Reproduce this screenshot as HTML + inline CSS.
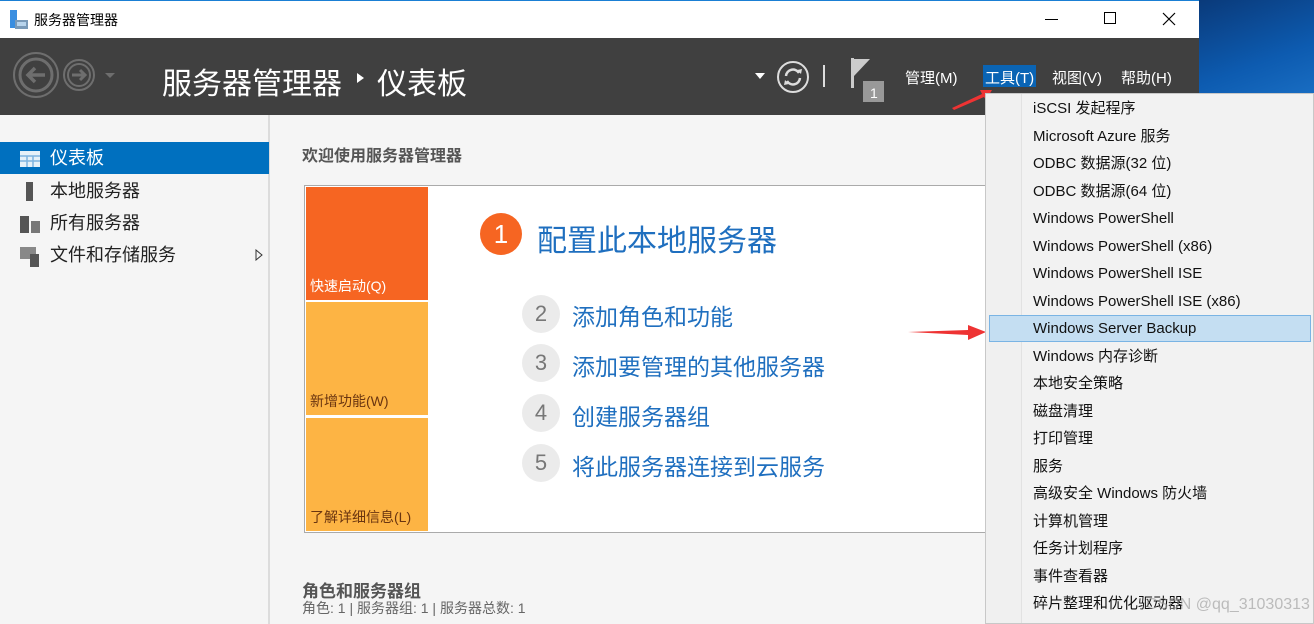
<!DOCTYPE html>
<html><head><meta charset="utf-8"><style>
*{margin:0;padding:0;box-sizing:border-box}
body{width:1314px;height:624px;overflow:hidden;position:relative;background:#f5f5f5;font-family:"Liberation Sans","Noto Sans CJK SC",sans-serif;}
.abs{position:absolute}
.desk{left:1199px;top:0;width:115px;height:100px;background:linear-gradient(160deg,#0a3a7a,#0d5bb0 60%,#1a6fc4)}
.title{left:0;top:0;width:1199px;height:38px;background:#fff;border-top:1px solid #1a7fd4}
.hdr{left:0;top:38px;width:1199px;height:77px;background:#404040}
.side{left:0;top:115px;width:270px;height:509px;background:#f5f5f5;border-right:2px solid #dcdcdc}
.nav{left:0;width:269px;height:32px;font-size:18px;color:#222;line-height:32px;padding-left:50px}
.menu{left:985px;top:93px;width:329px;height:531px;background:#f2f2f2;border:1px solid #c8c8c8}
.gut{left:0;top:0;width:36px;height:100%;background:#f0f0f0;border-right:1px solid #e2e2e2}
.mi{left:47px;font-size:15px;color:#111;line-height:20px}
.step{font-size:23px;color:#1f6fbf}
.num{width:38px;height:38px;border-radius:50%;background:#ebebeb;color:#777;font-size:22px;text-align:center;line-height:38px}
.hm{font-size:15px;color:#fff;top:29px}
</style></head><body>
<div class="abs desk"></div>
<div class="abs title">
 <svg class="abs" style="left:9px;top:9px" width="20" height="20"><rect x="1" y="0" width="7" height="18" fill="#3a8ee0"/><rect x="6" y="10" width="13" height="9" fill="#7a9ab8"/><rect x="8" y="12" width="9" height="4" fill="#b8d4ec"/></svg>
 <div class="abs" style="left:34px;top:9px;font-size:14px;color:#000">服务器管理器</div>
 <div class="abs" style="left:1045px;top:18px;width:13px;height:1px;background:#000"></div>
 <div class="abs" style="left:1104px;top:11px;width:12px;height:12px;border:1px solid #000"></div>
 <svg class="abs" style="left:1162px;top:11px" width="14" height="14"><path d="M1 1L13 13M13 1L1 13" stroke="#000" stroke-width="1.2"/></svg>
</div>
<div class="abs hdr">
 <svg class="abs" style="left:13px;top:14px" width="110" height="50"><circle cx="23" cy="23" r="22" fill="none" stroke="#6e6e6e" stroke-width="2"/><circle cx="23" cy="23" r="16" fill="none" stroke="#6e6e6e" stroke-width="3"/><path d="M32 23H15M22 16L15 23L22 30" fill="none" stroke="#6e6e6e" stroke-width="3.5"/><circle cx="66" cy="23" r="15" fill="none" stroke="#6e6e6e" stroke-width="2"/><circle cx="66" cy="23" r="11" fill="none" stroke="#6e6e6e" stroke-width="2"/><path d="M59 23H72M67 18L72 23L67 28" fill="none" stroke="#6e6e6e" stroke-width="3"/><path d="M92 21h10l-5 5z" fill="#6e6e6e"/></svg>
 <div class="abs" style="left:162px;top:21px;font-size:30px;color:#fff">服务器管理器</div>
 <svg class="abs" style="left:357px;top:35px" width="8" height="10"><path d="M0 0L7 5L0 10z" fill="#fff"/></svg>
 <div class="abs" style="left:377px;top:21px;font-size:30px;color:#fff">仪表板</div>
 <svg class="abs" style="left:755px;top:35px" width="10" height="6"><path d="M0 0h10L5 6z" fill="#fff"/></svg>
 <svg class="abs" style="left:776px;top:22px" width="34" height="34"><circle cx="17" cy="17" r="15" fill="none" stroke="#ddd" stroke-width="2"/><path d="M10 16a7 7 0 0 1 13-3M24 18a7 7 0 0 1-13 3" fill="none" stroke="#ddd" stroke-width="2.5"/><path d="M21 10l4 4l1-5zM13 24l-4-4l-1 5z" fill="#ddd"/></svg>
 <div class="abs" style="left:823px;top:27px;width:2px;height:22px;background:#ddd"></div>
 <svg class="abs" style="left:850px;top:20px" width="40" height="44"><rect x="1" y="0" width="3" height="30" fill="#ccc"/><path d="M4 1h16L4 18z" fill="#ccc"/><rect x="13" y="23" width="21" height="21" fill="#999"/><text x="20" y="40" font-size="14" fill="#fff" font-family="Liberation Sans">1</text></svg>
 <div class="abs hm" style="left:905px">管理(M)</div>
 <div class="abs" style="left:983px;top:27px;width:53px;height:22px;background:#0a64b4"></div>
 <div class="abs hm" style="left:985px">工具(T)</div>
 <div class="abs hm" style="left:1052px">视图(V)</div>
 <div class="abs hm" style="left:1121px">帮助(H)</div>
</div>
<svg class="abs" style="left:950px;top:88px" width="45" height="22"><path d="M2 20L32 6L30 2L42 2L36 12L34 9L4 22z" fill="#e33"/></svg>
<div class="abs side">
 <div class="abs nav" style="top:27px;background:#0070bf;color:#fff">仪表板</div>
 <svg class="abs" style="left:20px;top:36px" width="20" height="16"><rect width="20" height="16" fill="#fff" opacity=".9"/><path d="M0 5h20M0 10h20M7 5v11M13 5v11" stroke="#7fb4e0" stroke-width="1.5"/></svg>
 <div class="abs nav" style="top:60px">本地服务器</div>
 <div class="abs" style="left:26px;top:67px;width:7px;height:19px;background:#555"></div>
 <div class="abs nav" style="top:92px">所有服务器</div>
 <div class="abs" style="left:20px;top:101px;width:9px;height:17px;background:#555"></div><div class="abs" style="left:31px;top:106px;width:9px;height:12px;background:#777"></div>
 <div class="abs nav" style="top:124px">文件和存储服务</div>
 <div class="abs" style="left:20px;top:132px;width:16px;height:12px;background:#888"></div><div class="abs" style="left:30px;top:139px;width:9px;height:13px;background:#555"></div>
 <svg class="abs" style="left:255px;top:134px" width="8" height="12"><path d="M1 1L7 6L1 11z" fill="none" stroke="#333"/></svg>
</div>
<div class="abs" style="left:302px;top:142px;font-size:16px;font-weight:bold;color:#555">欢迎使用服务器管理器</div>
<div class="abs" style="left:304px;top:185px;width:690px;height:348px;background:#fff;border:1px solid #aaa"></div>
<div class="abs" style="left:306px;top:187px;width:122px;height:113px;background:#f66522"></div>
<div class="abs" style="left:306px;top:302px;width:122px;height:113px;background:#fdb444"></div>
<div class="abs" style="left:306px;top:418px;width:122px;height:113px;background:#fdb444"></div>
<div class="abs" style="left:310px;top:276px;font-size:14px;color:#fff">快速启动(Q)</div>
<div class="abs" style="left:310px;top:391px;font-size:14px;color:#6a3510">新增功能(W)</div>
<div class="abs" style="left:310px;top:507px;font-size:14px;color:#6a3510">了解详细信息(L)</div>
<div class="abs num" style="left:480px;top:213px;width:42px;height:42px;line-height:42px;background:#f66522;color:#fff;font-size:26px">1</div>
<div class="abs step" style="left:537px;top:216px;font-size:30px">配置此本地服务器</div>
<div class="abs num" style="left:522px;top:295px">2</div><div class="abs step" style="left:572px;top:298px">添加角色和功能</div>
<div class="abs num" style="left:522px;top:344px">3</div><div class="abs step" style="left:572px;top:348px">添加要管理的其他服务器</div>
<div class="abs num" style="left:522px;top:394px">4</div><div class="abs step" style="left:572px;top:398px">创建服务器组</div>
<div class="abs num" style="left:522px;top:444px">5</div><div class="abs step" style="left:572px;top:448px">将此服务器连接到云服务</div>
<div class="abs" style="left:302px;top:577px;font-size:17px;font-weight:bold;color:#555">角色和服务器组</div>
<div class="abs" style="left:302px;top:598px;font-size:14px;color:#666">角色: 1 | 服务器组: 1 | 服务器总数: 1</div>
<svg class="abs" style="left:908px;top:323px" width="80" height="20"><path d="M0 9L60 7L60 2L78 9L60 17L60 12z" fill="#e33"/></svg>
<div class="abs menu">
 <div class="abs gut"></div>
 <div class="abs" style="left:3px;top:221px;width:322px;height:27px;background:#c4def2;border:1px solid #7ab4e4"></div>
 <div class="abs mi" style="top:5px">iSCSI 发起程序</div>
 <div class="abs mi" style="top:33px">Microsoft Azure 服务</div>
 <div class="abs mi" style="top:60px">ODBC 数据源(32 位)</div>
 <div class="abs mi" style="top:88px">ODBC 数据源(64 位)</div>
 <div class="abs mi" style="top:115px">Windows PowerShell</div>
 <div class="abs mi" style="top:143px">Windows PowerShell (x86)</div>
 <div class="abs mi" style="top:170px">Windows PowerShell ISE</div>
 <div class="abs mi" style="top:198px">Windows PowerShell ISE (x86)</div>
 <div class="abs mi" style="top:225px">Windows Server Backup</div>
 <div class="abs mi" style="top:253px">Windows 内存诊断</div>
 <div class="abs mi" style="top:280px">本地安全策略</div>
 <div class="abs mi" style="top:308px">磁盘清理</div>
 <div class="abs mi" style="top:335px">打印管理</div>
 <div class="abs mi" style="top:363px">服务</div>
 <div class="abs mi" style="top:390px">高级安全 Windows 防火墙</div>
 <div class="abs mi" style="top:418px">计算机管理</div>
 <div class="abs mi" style="top:445px">任务计划程序</div>
 <div class="abs mi" style="top:473px">事件查看器</div>
 <div class="abs mi" style="top:500px">碎片整理和优化驱动器</div>
 <div class="abs" style="left:160px;top:502px;font-size:16px;color:rgba(150,150,150,.6)">CSDN @qq_31030313</div>
</div>
</body></html>
